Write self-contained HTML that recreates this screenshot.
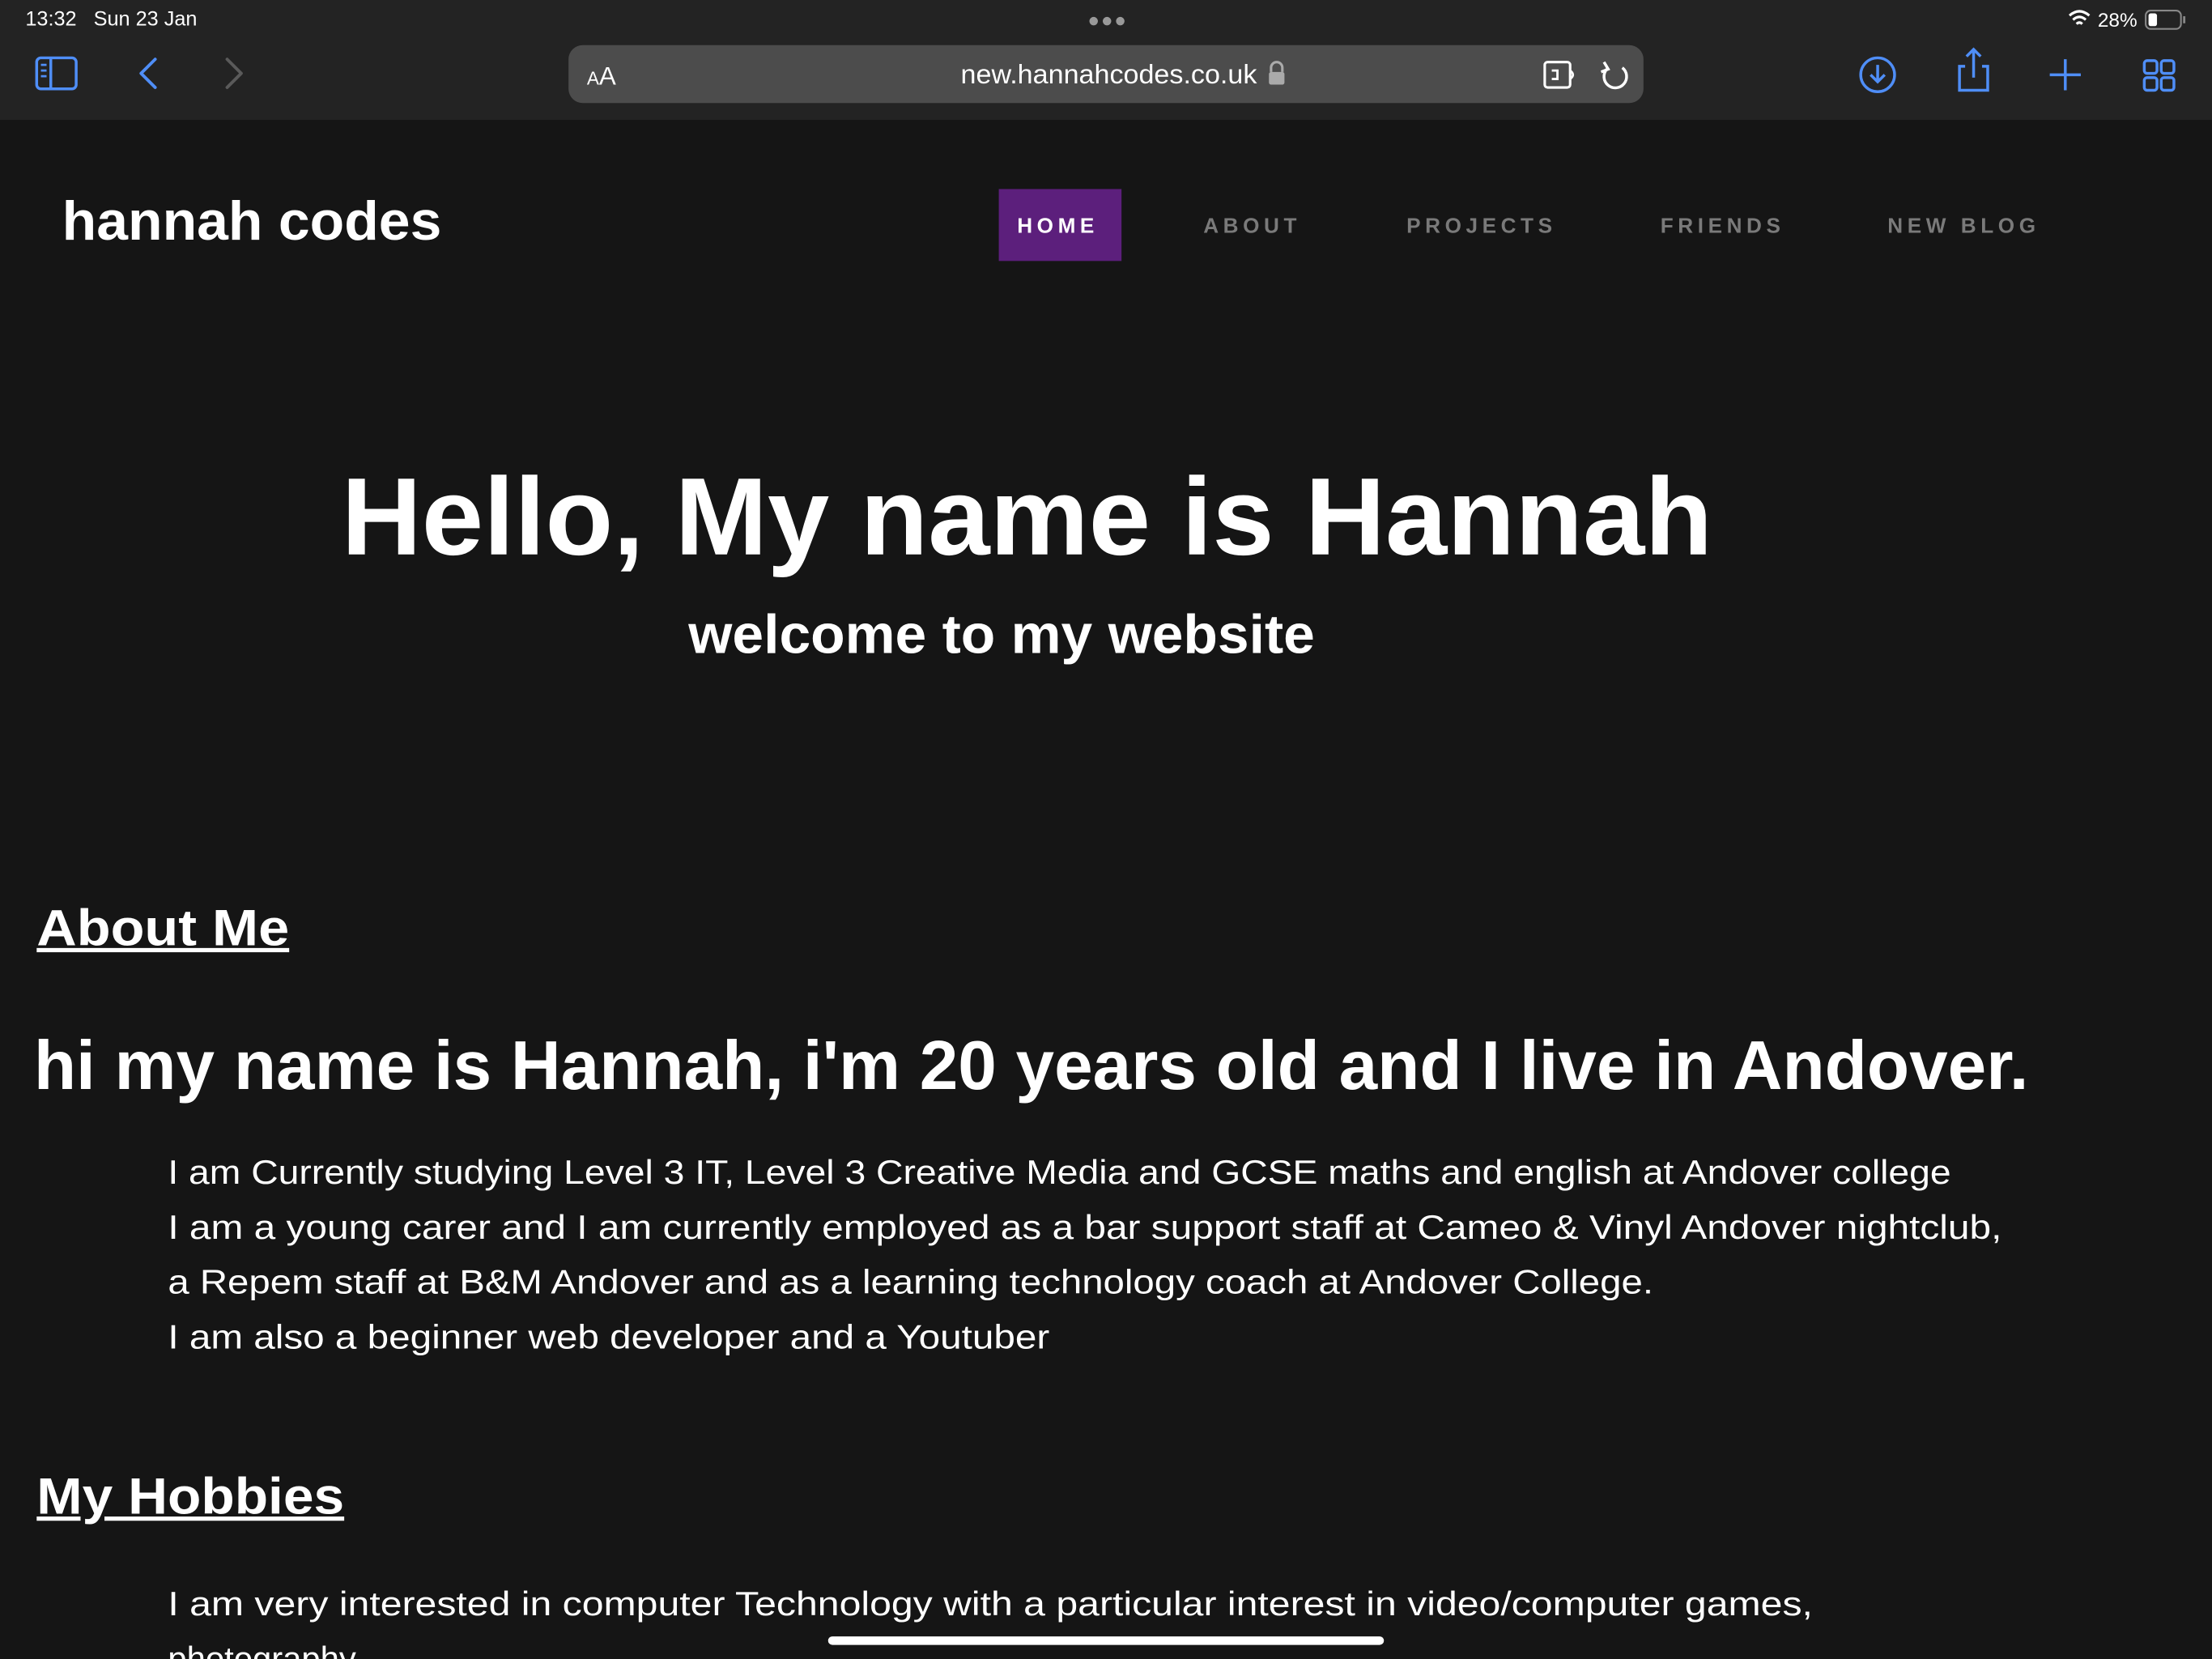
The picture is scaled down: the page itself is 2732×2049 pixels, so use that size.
<!DOCTYPE html>
<html><head><meta charset="utf-8">
<style>
html,body{margin:0;padding:0;width:2732px;height:2048px;overflow:hidden;background:#151515;}
#w{position:absolute;left:0;top:0;width:1568px;height:1176px;transform:scale(1.74235);transform-origin:0 0;background:#151515;font-family:"Liberation Sans",sans-serif;color:#fff;overflow:hidden;}
.a{position:absolute;white-space:nowrap;transform-origin:0 50%;}
#bar{position:absolute;left:0;top:0;width:1568px;height:85px;background:#232323;}
#url{position:absolute;left:403px;top:32px;width:762px;height:41px;background:#4c4c4c;border-radius:10px;}
.nav{position:absolute;top:152px;font-size:15px;font-weight:bold;letter-spacing:3.2px;color:#7a7a7a;}
.p{font-size:24px;color:#fff;}
</style></head><body>
<div id="w">
<div id="bar"></div>
<div class="a" style="left:18px;top:6px;font-size:14.5px;">13:32&nbsp;&nbsp;&nbsp;Sun 23 Jan</div>
<div class="a" style="left:771px;top:6px;font-size:14px;color:#999;letter-spacing:1px;">●●●</div>
<svg style="position:absolute;left:1466px;top:6px" width="84" height="16" viewBox="0 0 84 16">
<path d="M1 5 Q8 -1 15 5 M3.5 8 Q8 4 12.5 8 M6 11 Q8 9 10 11" stroke="#fff" stroke-width="1.8" fill="none"/>
<text x="21" y="13" fill="#fff" font-size="14" font-family="Liberation Sans">28%</text>
<rect x="55" y="1.5" width="25" height="13" rx="3.5" fill="none" stroke="#888" stroke-width="1.2"/>
<rect x="57" y="3.5" width="6" height="9" rx="1.5" fill="#fff"/>
<rect x="81.5" y="5.5" width="1.6" height="5" fill="#888"/>
</svg>
<svg style="position:absolute;left:0;top:30px" width="200" height="46" viewBox="0 0 200 46">
<rect x="26" y="11" width="28" height="22" rx="3" fill="none" stroke="#4f8ef7" stroke-width="2"/>
<line x1="36" y1="11" x2="36" y2="33" stroke="#4f8ef7" stroke-width="2"/>
<path d="M29 16h4M29 20h4M29 24h4" stroke="#4f8ef7" stroke-width="1.6"/>
<path d="M110 12 L100 22 L110 32" stroke="#4f8ef7" stroke-width="2.2" fill="none" stroke-linecap="round" stroke-linejoin="round"/>
<path d="M161 12 L171 22 L161 32" stroke="#5a5a5a" stroke-width="2.2" fill="none" stroke-linecap="round" stroke-linejoin="round"/>
</svg>
<div id="url"></div>
<div class="a" style="left:416px;top:44px;font-size:18px;"><span style="font-size:13px">A</span>A</div>
<div class="a" id="u" style="left:681px;top:43px;font-size:19px;">new.hannahcodes.co.uk</div>
<svg style="position:absolute;left:898px;top:43px" width="14" height="18"><path d="M3 8V5a4 4 0 0 1 8 0v3" stroke="#aaa" stroke-width="1.8" fill="none"/><rect x="1.5" y="8" width="11" height="9" rx="1.5" fill="#aaa"/></svg>
<svg style="position:absolute;left:1090px;top:38px" width="70" height="30" viewBox="0 0 70 30">
<rect x="5" y="6" width="18" height="18" rx="2" fill="none" stroke="#fff" stroke-width="1.8"/>
<path d="M10 12h4v6h-4 M23 12 q4 3 0 6" stroke="#fff" stroke-width="1.6" fill="none"/>
<path d="M60 10 A8 8 0 1 1 49 11" stroke="#fff" stroke-width="2" fill="none"/>
<path d="M47 6 L50 11 L45 13" stroke="#fff" stroke-width="2" fill="none"/>
</svg>
<svg style="position:absolute;left:1300px;top:30px" width="268" height="46" viewBox="0 0 268 46">
<circle cx="31" cy="23" r="12" fill="none" stroke="#4f8ef7" stroke-width="2"/>
<path d="M31 16v12 M26 23l5 5 5-5" stroke="#4f8ef7" stroke-width="2" fill="none"/>
<path d="M93 17h-4v17h20v-17h-4 M99 5v20 M94 10l5-5 5 5" stroke="#4f8ef7" stroke-width="2" fill="none"/>
<path d="M164 12v22 M153 23h22" stroke="#4f8ef7" stroke-width="2"/>
<rect x="220" y="13" width="9" height="9" rx="2" fill="none" stroke="#4f8ef7" stroke-width="2"/>
<rect x="232" y="13" width="9" height="9" rx="2" fill="none" stroke="#4f8ef7" stroke-width="2"/>
<rect x="220" y="25" width="9" height="9" rx="2" fill="none" stroke="#4f8ef7" stroke-width="2"/>
<rect x="232" y="25" width="9" height="9" rx="2" fill="none" stroke="#4f8ef7" stroke-width="2"/>
</svg>

<div class="a" id="t1" style="left:44px;top:135px;font-size:39px;font-weight:bold;line-height:46px;">hannah codes</div>
<div style="position:absolute;left:708px;top:134px;width:87px;height:51px;background:#5c1f7c;"></div>
<div class="nav" style="left:721px;color:#fff;">HOME</div>
<div class="nav" style="left:853px;">ABOUT</div>
<div class="nav" style="left:997px;">PROJECTS</div>
<div class="nav" style="left:1177px;">FRIENDS</div>
<div class="nav" style="left:1338px;">NEW BLOG</div>

<div class="a" id="t2" style="left:242px;top:321px;font-size:78px;font-weight:bold;line-height:90px;">Hello, My name is Hannah</div>
<div class="a" id="t3" style="left:488px;top:428px;font-size:39px;font-weight:bold;line-height:46px;">welcome to my website</div>

<div class="a" id="t4" style="left:26px;top:636px;font-size:36px;font-weight:bold;line-height:44px;text-decoration:underline;text-decoration-thickness:3px;">About Me</div>
<div class="a" id="t5" style="left:24px;top:727px;font-size:49px;font-weight:bold;line-height:58px;">hi my name is Hannah, i'm 20 years old and I live in Andover.</div>
<div class="a p" id="p1" style="left:119px;top:817px;line-height:30px;">I am Currently studying Level 3 IT, Level 3 Creative Media and GCSE maths and english at Andover college</div>
<div class="a p" id="p2" style="left:119px;top:856px;line-height:30px;">I am a young carer and I am currently employed as a bar support staff at Cameo &amp; Vinyl Andover nightclub,</div>
<div class="a p" id="p3" style="left:119px;top:895px;line-height:30px;">a Repem staff at B&amp;M Andover and as a learning technology coach at Andover College.</div>
<div class="a p" id="p4" style="left:119px;top:934px;line-height:30px;">I am also a beginner web developer and a Youtuber</div>

<div class="a" id="t6" style="left:26px;top:1039px;font-size:36px;font-weight:bold;line-height:44px;text-decoration:underline;text-decoration-thickness:3px;">My Hobbies</div>
<div class="a p" id="p5" style="left:119px;top:1123px;line-height:30px;">I am very interested in computer Technology with a particular interest in video/computer games,</div>
<div class="a p" style="left:119px;top:1162px;line-height:30px;">photography</div>
<div style="position:absolute;left:587px;top:1160px;width:394px;height:6px;border-radius:3px;background:#fff;"></div>
</div>
<script>
var T={u:210,t1:269,t2:972,t3:444,t4:179,t5:1414,p1:1264,p2:1300,p3:1053,p4:625,t6:218,p5:1166};
for(var k in T){var e=document.getElementById(k);var w=e.getBoundingClientRect().width/1.74235;if(w>0)e.style.transform='scaleX('+(T[k]/w)+')';}
</script>
</body></html>
